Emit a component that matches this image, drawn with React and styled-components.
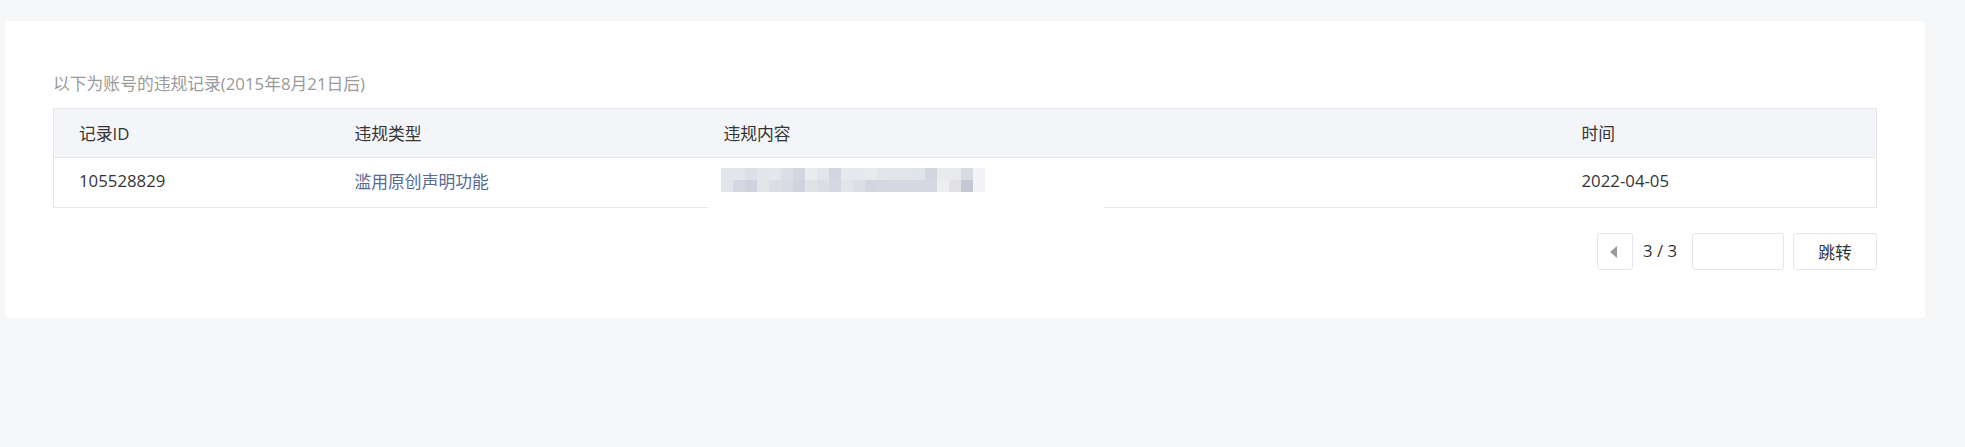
import styled, { createGlobalStyle } from "styled-components"

const GlobalStyle = createGlobalStyle`
  html, body {
    margin: 0;
    padding: 0;
    background: #f6f7f9;
  }
  body {
    font-family: "Open Sans", "Noto Sans CJK SC", sans-serif;
  }
`

const mosaic = [
  ["#e4e5eb", "#e4e5eb", "#dce0e8", "#e4e5eb", "#e6e7ec", "#dcdee6", "#d3d6e0", "#ebecf0", "#e4e5eb", "#d3d6e0", "#e8e9ee", "#e6e8ee", "#e9eaee", "#e4e5ea", "#e3e4ea", "#e3e4ea", "#dfe3ea", "#d3d5df", "#e8eaee", "#e9eaee", "#d9dbe3", "#f3f4f7"],
  ["#e4e5ea", "#d5d8e2", "#d0d3de", "#e3e4ea", "#dcdee6", "#d9dbe4", "#d0d3de", "#e1e2e8", "#dcdde5", "#d5d8e2", "#e3e4ea", "#dedfe6", "#d3d5df", "#d6d8e1", "#d6d8e1", "#d6d8e1", "#d6d8e1", "#d6d8e1", "#eeeef1", "#e0e1e7", "#c5c7d4", "#f3f4f7"],
]

export default function App() {
  return (
    <Page>
      <GlobalStyle />
      <Card>
        <Caption>以下为账号的违规记录(2015年8月21日后)</Caption>
        <Table>
          <colgroup>
            <col style={{ width: 276 }} />
            <col style={{ width: 369 }} />
            <col style={{ width: 858 }} />
            <col />
          </colgroup>
          <thead>
            <tr>
              <Th>记录ID</Th>
              <Th>违规类型</Th>
              <Th>违规内容</Th>
              <Th>时间</Th>
            </tr>
          </thead>
          <tbody>
            <tr>
              <Td>105528829</Td>
              <Td $link>滥用原创声明功能</Td>
              <Td $masked>
                <Redaction>
                  <Mosaic>
                    {mosaic.flat().map((c, i) => (
                      <MosaicCell key={i} style={{ background: c }} />
                    ))}
                  </Mosaic>
                </Redaction>
              </Td>
              <Td>2022-04-05</Td>
            </tr>
          </tbody>
        </Table>
        <Pager>
          <PageButton aria-label="上一页">
            <svg width="8" height="12" viewBox="0 0 8 12">
              <path d="M7 0 L7 12 L0 6 Z" fill="#9a9a9a" />
            </svg>
          </PageButton>
          <PageInfo>3 / 3</PageInfo>
          <PageInput />
          <JumpButton>跳转</JumpButton>
        </Pager>
      </Card>
    </Page>
  )
}

const Page = styled.div`
  min-height: 447px;
  box-sizing: border-box;
  padding: 21px 40px 0 5px;
  background: #f6f7f9;
`

const Card = styled.div`
  background: #fff;
  border-radius: 4px;
  padding: 53px 48px 48px 48px;
`

const Caption = styled.div`
  font-size: 16.8px;
  line-height: 20px;
  color: #9a9a9a;
  margin-bottom: 14px;
`

const Table = styled.table`
  width: 100%;
  border-collapse: collapse;
  table-layout: fixed;
  border: 1px solid #e4e6eb;
  font-size: 16.8px;
`

const Th = styled.th`
  height: 48px;
  padding: 0 0 0 25px;
  text-align: left;
  font-weight: normal;
  color: #353535;
  background: #f4f5f9;
  border-bottom: 1px solid #e4e6eb;
`

const Td = styled.td`
  height: 45px;
  padding: 0 0 4px ${(p) => (p.$masked ? "0" : "25px")};
  color: ${(p) => (p.$link ? "#576b95" : "#353535")};
  position: ${(p) => (p.$masked ? "relative" : "static")};
  border-bottom: 1px solid #e4e6eb;
`

const Redaction = styled.div`
  position: absolute;
  left: 9px;
  width: 396px;
  top: 0;
  bottom: -1px;
  background: #fff;
  display: flex;
  align-items: center;
  padding: 0 0 6px 13px;
  box-sizing: border-box;
`

const Mosaic = styled.div`
  display: grid;
  grid-template-columns: repeat(22, 12px);
  grid-auto-rows: 12px;
`

const MosaicCell = styled.span`
  display: block;
`

const Pager = styled.div`
  display: flex;
  justify-content: flex-end;
  align-items: center;
  margin-top: 25px;
`

const PageButton = styled.button`
  width: 36px;
  height: 37px;
  box-sizing: border-box;
  border: 1px solid #e4e6eb;
  border-radius: 3px;
  background: #fff;
  display: flex;
  align-items: center;
  justify-content: center;
  padding: 0 2px 0 0;
`

const PageInfo = styled.span`
  font-size: 16.8px;
  color: #353535;
  margin: 0 15px 3px 10px;
`

const PageInput = styled.input`
  width: 92px;
  height: 37px;
  box-sizing: border-box;
  border: 1px solid #e4e6eb;
  border-radius: 3px;
  outline: none;
  margin-right: 9px;
`

const JumpButton = styled.button`
  width: 84px;
  height: 37px;
  box-sizing: border-box;
  border: 1px solid #e4e6eb;
  border-radius: 3px;
  background: #fff;
  font-family: inherit;
  font-size: 16.8px;
  color: #353535;
  padding: 0;
`
